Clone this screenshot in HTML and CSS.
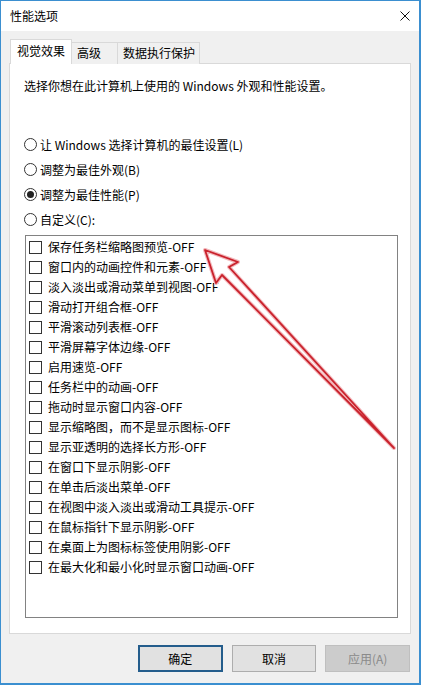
FILE: index.html
```html
<!DOCTYPE html>
<html lang="zh-CN">
<head>
<meta charset="utf-8">
<title>性能选项</title>
<link rel="stylesheet" href="styles.css">
</head>
<body>
<div class="window">
  <div class="titlebar">
    <span class="title">性能选项</span>
    <svg class="close" width="10" height="10" viewBox="0 0 10 10"><path d="M0.5 0.5 L9.5 9.5 M9.5 0.5 L0.5 9.5" stroke="#111" stroke-width="1" fill="none"/></svg>
  </div>
  <div class="client">
    <div class="tabs">
      <div class="tab active">视觉效果</div>
      <div class="tab">高级</div>
      <div class="tab">数据执行保护</div>
    </div>
    <div class="panel">
      <p class="desc">选择你想在此计算机上使用的 Windows 外观和性能设置。</p>
      <div class="radios">
        <div class="radio-row"><span class="radio"></span><span>让 Windows 选择计算机的最佳设置(L)</span></div>
        <div class="radio-row"><span class="radio"></span><span>调整为最佳外观(B)</span></div>
        <div class="radio-row"><span class="radio checked"></span><span>调整为最佳性能(P)</span></div>
        <div class="radio-row"><span class="radio"></span><span>自定义(C):</span></div>
      </div>
      <div class="listbox">
        <div class="item"><span class="check"></span><span>保存任务栏缩略图预览-OFF</span></div>
        <div class="item"><span class="check"></span><span>窗口内的动画控件和元素-OFF</span></div>
        <div class="item"><span class="check"></span><span>淡入淡出或滑动菜单到视图-OFF</span></div>
        <div class="item"><span class="check"></span><span>滑动打开组合框-OFF</span></div>
        <div class="item"><span class="check"></span><span>平滑滚动列表框-OFF</span></div>
        <div class="item"><span class="check"></span><span>平滑屏幕字体边缘-OFF</span></div>
        <div class="item"><span class="check"></span><span>启用速览-OFF</span></div>
        <div class="item"><span class="check"></span><span>任务栏中的动画-OFF</span></div>
        <div class="item"><span class="check"></span><span>拖动时显示窗口内容-OFF</span></div>
        <div class="item"><span class="check"></span><span>显示缩略图，而不是显示图标-OFF</span></div>
        <div class="item"><span class="check"></span><span>显示亚透明的选择长方形-OFF</span></div>
        <div class="item"><span class="check"></span><span>在窗口下显示阴影-OFF</span></div>
        <div class="item"><span class="check"></span><span>在单击后淡出菜单-OFF</span></div>
        <div class="item"><span class="check"></span><span>在视图中淡入淡出或滑动工具提示-OFF</span></div>
        <div class="item"><span class="check"></span><span>在鼠标指针下显示阴影-OFF</span></div>
        <div class="item"><span class="check"></span><span>在桌面上为图标标签使用阴影-OFF</span></div>
        <div class="item"><span class="check"></span><span>在最大化和最小化时显示窗口动画-OFF</span></div>
      </div>
    </div>
    <div class="buttons">
      <button class="btn default">确定</button>
      <button class="btn">取消</button>
      <button class="btn disabled">应用(A)</button>
    </div>
  </div>
</div>
<svg class="arrow" width="421" height="685" viewBox="0 0 421 685">
  <path d="M205 250 L238 262 L229 267 L394 448 L222 275 L216 283 Z" fill="none" stroke="#f3b9bd" stroke-width="4" stroke-linejoin="round"/>
  <path d="M205 250 L238 262 L229 267 L394 448 L222 275 L216 283 Z" fill="none" stroke="#c9222c" stroke-width="1.8" stroke-linejoin="round"/>
</svg>
</body>
</html>
```
FILE: styles.css
```css
html, body {
  margin: 0;
  padding: 0;
}
body {
  width: 421px;
  height: 685px;
  overflow: hidden;
  position: relative;
  font-family: "Noto Sans CJK SC", "Noto Sans", sans-serif;
  font-size: 12px;
  color: #000;
  background: #f0f0f0;
}
.window {
  box-sizing: border-box;
  width: 421px;
  height: 685px;
  border: 1px solid #3b8fd0;
  border-right-width: 2px;
  border-bottom-width: 2px;
  display: flex;
  flex-direction: column;
  background: #f0f0f0;
}
.titlebar {
  height: 30px;
  background: #fff;
  display: flex;
  align-items: center;
  justify-content: space-between;
  padding: 0 9px 0 9px;
  flex: none;
}
.title {
  line-height: 16px;
}
.close {
  display: block;
}
.client {
  flex: 1;
  display: flex;
  flex-direction: column;
  padding: 9px 9px 0 8px;
}
.tabs {
  display: flex;
  align-items: flex-end;
  height: 24px;
  padding-left: 1px;
  margin-bottom: -1px;
  position: relative;
  z-index: 1;
}
.tab {
  box-sizing: border-box;
  height: 22px;
  border: 1px solid #d9d9d9;
  border-bottom: none;
  border-left: none;
  background: #f0f0f0;
  line-height: 20px;
  padding: 0 0 0 5px;
  white-space: nowrap;
  text-align: left;
}
.tab.active {
  height: 25px;
  border-left: 1px solid #d9d9d9;
  background: #fff;
  width: 62px;
  padding-left: 6px;
  line-height: 22px;
}
.tab:nth-child(2) { width: 46px; padding-left: 5px; }
.tab:nth-child(3) { width: 82px; padding-left: 5px; }
.panel {
  box-sizing: border-box;
  width: 402px;
  height: 571px;
  background: #fff;
  border: 1px solid #d9d9d9;
  padding: 14px 0 0 14px;
}
.desc {
  margin: 0;
  line-height: 16px;
}
.radios {
  margin-top: 38px;
  display: flex;
  flex-direction: column;
}
.radio-row {
  height: 25px;
  display: flex;
  align-items: center;
  gap: 3px;
  line-height: 16px;
}
.radio {
  box-sizing: border-box;
  width: 13px;
  height: 13px;
  border: 1px solid #333;
  border-radius: 50%;
  background: #fff;
  display: flex;
  align-items: center;
  justify-content: center;
  flex: none;
}
.radio.checked::after {
  content: "";
  width: 7px;
  height: 7px;
  border-radius: 50%;
  background: #222;
}
.listbox {
  box-sizing: border-box;
  margin-top: 3px;
  margin-left: 1px;
  width: 373px;
  height: 383px;
  border: 1px solid #828282;
  padding: 1px 0 0 3px;
}
.item {
  height: 20px;
  display: flex;
  align-items: center;
  gap: 6px;
  line-height: 16px;
}
.check {
  box-sizing: border-box;
  width: 13px;
  height: 13px;
  border: 1px solid #333;
  background: #fff;
  flex: none;
}
.buttons {
  display: flex;
  gap: 9px;
  padding-left: 129px;
  margin-top: 11px;
}
.btn {
  box-sizing: border-box;
  width: 86px;
  height: 27px;
  font: inherit;
  color: #000;
  background: #e1e1e1;
  border: 1px solid #adadad;
  padding: 0;
  line-height: 16px;
}
.btn.default {
  border: 2px solid #245d8c;
}
.btn.disabled {
  background: #cccccc;
  border-color: #bfbfbf;
  color: #8a8a8a;
}
.arrow {
  position: absolute;
  left: 0;
  top: 0;
  pointer-events: none;
}
```
